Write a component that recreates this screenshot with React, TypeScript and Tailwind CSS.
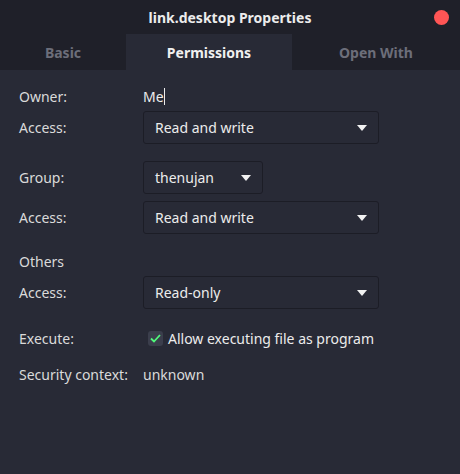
import React from 'react';

const font = { fontFamily: '"Noto Sans", "Open Sans", sans-serif' };

function Arrow() {
  return (
    <svg width="10" height="6" viewBox="0 0 10 6" className="shrink-0">
      <path d="M0 0 L10 0 L5 6 Z" fill="#f2f2f2" />
    </svg>
  );
}

function Dropdown({ value, wide = true }: { value: string; wide?: boolean }) {
  return (
    <div
      className={`flex items-center justify-between h-[33px] pl-[11px] pr-[11px] rounded-[3px] border border-[#1c1d26] bg-[#282a36] text-[#ececec] ${
        wide ? 'w-[236px]' : 'w-[120px]'
      }`}
    >
      <span>{value}</span>
      <Arrow />
    </div>
  );
}

function Row({ label, children, className = '' }: { label: string; children?: React.ReactNode; className?: string }) {
  return (
    <div className={`flex items-center ${className}`}>
      <div className="w-[124px] shrink-0 text-[#dadada]">{label}</div>
      {children}
    </div>
  );
}

export default function App() {
  return (
    <div style={font} className="w-[460px] h-[474px] bg-[#282a36] text-[14px] flex flex-col overflow-hidden">
      {/* Title bar */}
      <div className="relative h-[34px] bg-[#1f2029] flex items-center justify-center shrink-0">
        <span className="font-bold text-[#ececec]">link.desktop Properties</span>
        <span className="absolute right-[11px] top-[10px] w-[15px] h-[15px] rounded-full bg-[#ff5555]" />
      </div>

      {/* Tabs */}
      <div className="flex h-[36px] bg-[#1f2029] shrink-0 font-bold">
        <div className="w-[126px] flex items-center justify-center text-[#6c6e7a]">Basic</div>
        <div className="w-[166px] flex items-center justify-center bg-[#282a36] text-[#f0f0f0]">Permissions</div>
        <div className="flex-1 flex items-center justify-center text-[#6c6e7a]">Open With</div>
      </div>

      {/* Content */}
      <div className="flex-1 flex flex-col pl-[19px] pt-[16px] border-l-[3px] border-[#22232c] -ml-[3px]">
        <Row label="Owner:" className="h-[20px]">
          <span className="text-[#ececec] flex items-center">
            Me<span className="inline-block w-px h-[17px] bg-[#ececec]" />
          </span>
        </Row>
        <Row label="Access:" className="mt-[5px]">
          <Dropdown value="Read and write" />
        </Row>
        <Row label="Group:" className="mt-[17px]">
          <Dropdown value="thenujan" wide={false} />
        </Row>
        <Row label="Access:" className="mt-[7px]">
          <Dropdown value="Read and write" />
        </Row>
        <div className="mt-[17px] h-[20px] flex items-center text-[#dadada]">Others</div>
        <Row label="Access:" className="mt-[5px]">
          <Dropdown value="Read-only" />
        </Row>
        <Row label="Execute:" className="mt-[19px] h-[20px]">
          <div className="flex items-center gap-[5px] pl-[5px]">
            <div className="w-[15px] h-[15px] rounded-[3px] bg-[#3b3e4c] flex items-center justify-center">
              <svg width="11" height="9" viewBox="0 0 11 9">
                <path d="M1 4.5 L4 7.5 L10 1" fill="none" stroke="#50fa7b" strokeWidth="1.8" />
              </svg>
            </div>
            <span className="text-[#ececec]">Allow executing file as program</span>
          </div>
        </Row>
        <Row label="Security context:" className="mt-[16px] h-[20px]">
          <span className="text-[#dadada]">unknown</span>
        </Row>
      </div>
    </div>
  );
}
